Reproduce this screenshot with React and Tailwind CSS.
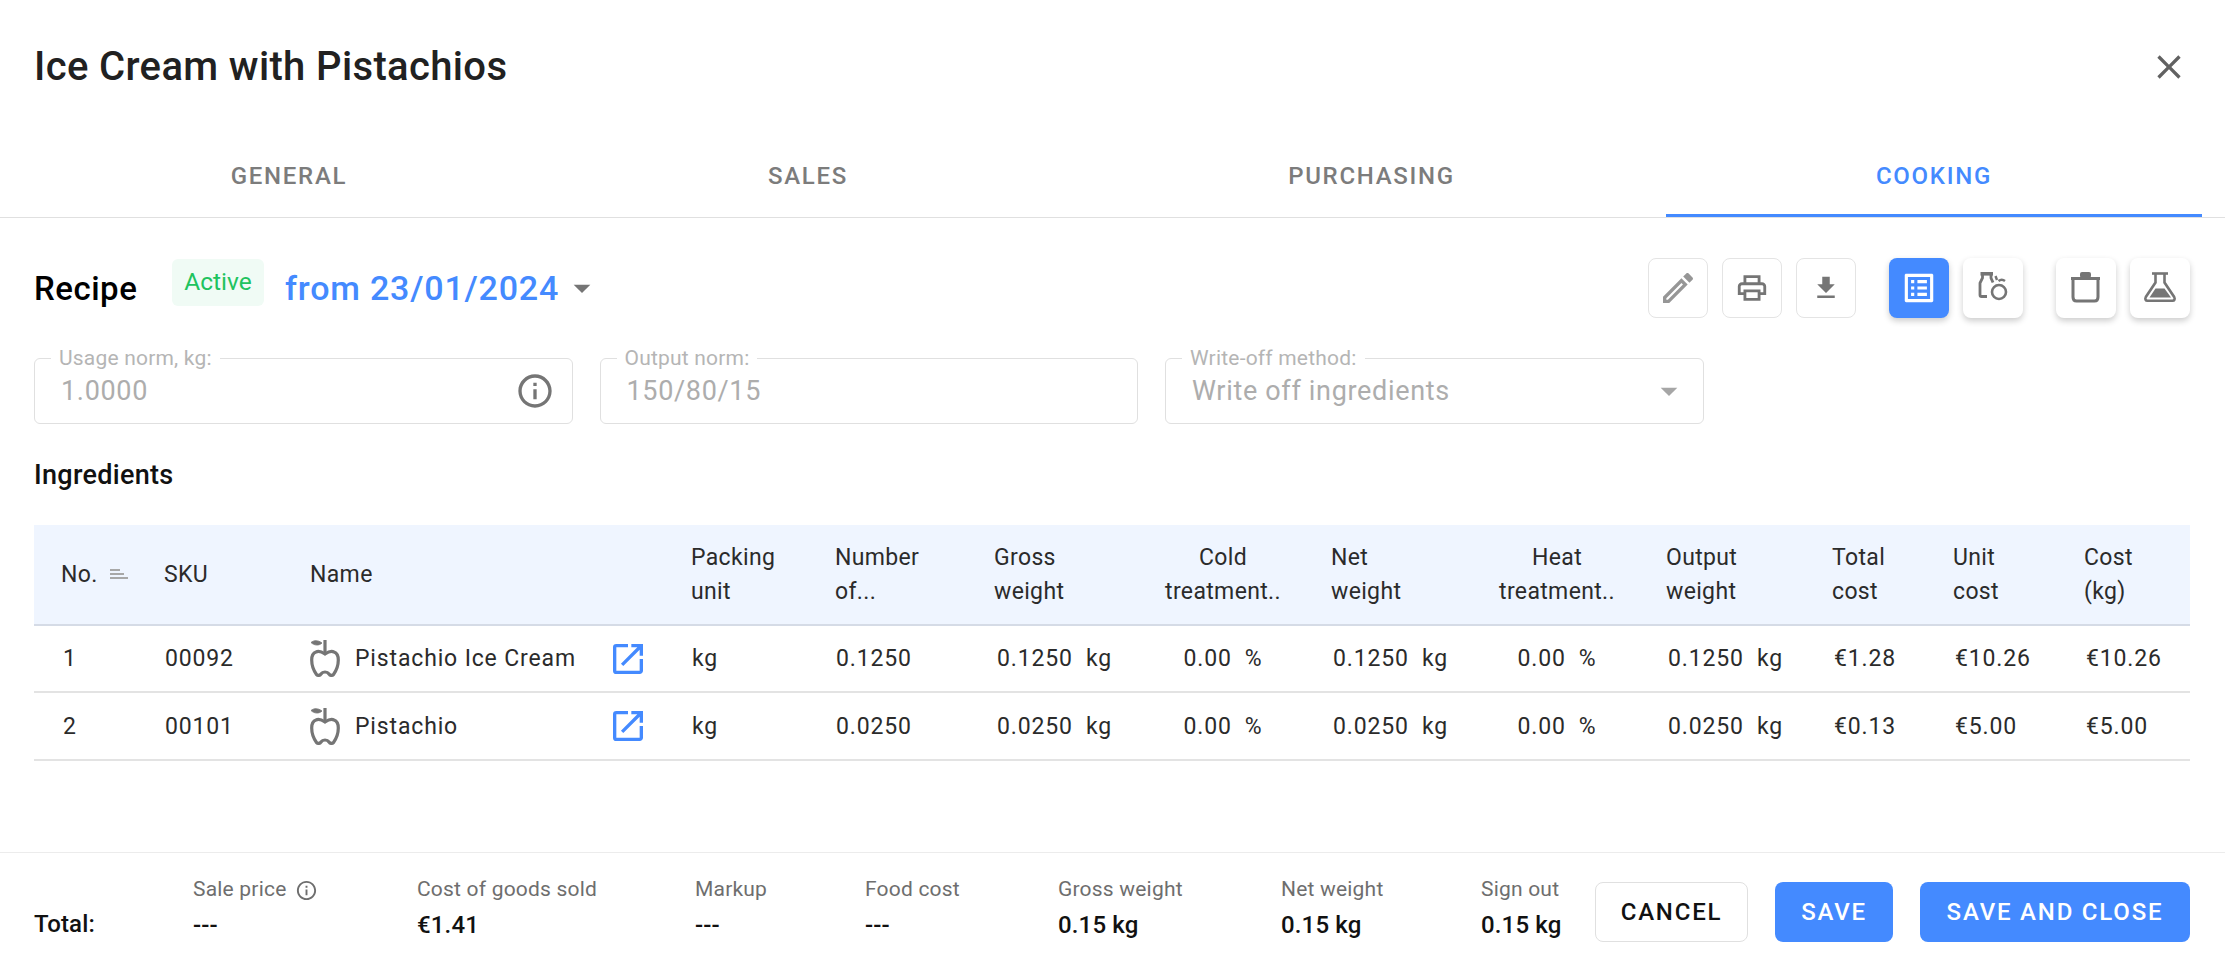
const F = "font-['Roboto',sans-serif]";
const Ico = ({ d, size = 24, color = "#757575", vb = "0 0 24 24", className = "" }) => (
  <svg width={size} height={size} viewBox={vb} fill={color} className={className}><path d={d} /></svg>
);
const Caret = ({ color = "#757575", size = 40 }) => <Ico size={size} color={color} d="M7 10l5 5 5-5z" />;
const Apple = () => (
  <svg width="30" height="37" viewBox="0 0 30 37" fill="none" stroke="#757575" strokeWidth="3.200" className="shrink-0">
    <path d="M15 0v14" />
    <path d="M1 2.500c3-2.500 7-2.500 11 .5-3 3-8 2.500-11-.5z" fill="#757575" strokeWidth="0.800" />
    <path d="M15 14C12 12 8 11 6 12 3 13 1.700 16 1.700 20c0 5 2.300 11 4.800 14.500 1.500 1.500 3.500 1 4.500-.5s2-2 4-2 3 .5 4 2 3 2 4.500.5C26 31 28.300 25 28.300 20c0-4-1.300-7-4.300-8-2-1-6 0-9 2z" />
  </svg>
);
const Open = () => (
  <Ico size={40} color="#448aff" d="M19 19H5V5h7V3H5a2 2 0 0 0-2 2v14a2 2 0 0 0 2 2h14c1.100 0 2-.9 2-2v-7h-2v7zM14 3v2h3.590l-9.830 9.830 1.410 1.410L19 6.410V10h2V3h-7z" />
);
const Field = ({ label, value, right }) => (
  <div className="relative h-[66px] w-[538.5px] rounded-md border border-[#e0e0e0] flex items-center pl-[26px] pr-[17px]">
    <span className="absolute left-[16px] -top-[12px] bg-white px-[8px] text-[21px] leading-[22px] tracking-[0.200px] text-[#b5b5b5]">{label}</span>
    <span className="flex-1 text-[27px] tracking-[0.670px] text-[#adadad]">{value}</span>
    {right}
  </div>
);
const TB = ({ children, kind }) => (
  <div className={
    "w-[60px] h-[60px] rounded-lg flex items-center justify-center " +
    (kind === "line" ? "border border-[#e4e4e4] bg-white" : kind === "blue" ? "bg-[#448aff] shadow-[0_3px_6px_rgba(0,0,0,0.2)]" : "bg-white shadow-[0_3px_6px_rgba(0,0,0,0.2)]")
  }>{children}</div>
);
const cols = "grid grid-cols-[103px_146px_381px_144px_159px_159px_178px_159px_176px_166px_121px_131px_105px] pl-[27px]";
const H = ({ children, center, pr }) => (
  <div className={(center ? "text-center " : "") + (pr || "")}>{children}</div>
);
const rows = [
  ["1", "00092", "Pistachio Ice Cream", "0.1250", "€1.28", "€10.26", "€10.26", "h-[67px]"],
  ["2", "00101", "Pistachio", "0.0250", "€0.13", "€5.00", "€5.00", "h-[68px]"],
];
const Sum = ({ w, label, value, info }) => (
  <div className={w + " shrink-0"}>
    <div className="h-[30px] flex items-center gap-[8px] text-[21px] tracking-[0.200px] text-[#6e6e6e]">
      {label}
      {info && <Ico size={23} color="#6e6e6e" d="M11 7h2v2h-2zm0 4h2v6h-2zm1-9C6.480 2 2 6.480 2 12s4.480 10 10 10 10-4.480 10-10S17.520 2 12 2zm0 18c-4.410 0-8-3.590-8-8s3.590-8 8-8 8 3.590 8 8-3.590 8-8 8z" />}
    </div>
    <div className="mt-[5px] h-[30px] flex items-center text-[24px] font-medium tracking-[0.150px] text-[#111]">{value}</div>
  </div>
);
const Btn = ({ children, w, blue }) => (
  <div className={w + " h-[60px] rounded-lg flex items-center justify-center text-[24px] font-medium tracking-[1.800px] " + (blue ? "bg-[#448aff] text-white" : "bg-white border border-[#e0e0e0] text-[#111]")}>{children}</div>
);
const tabs = [["GENERAL", "w-[500px]"], ["SALES", "w-[538px]"], ["PURCHASING", "w-[589px]"], ["COOKING", "w-[536px]"]];

export default function App() {
  return (
    <div className={F + " w-[2225px] h-[966px] bg-white flex flex-col text-[#212121] overflow-hidden"}>
      <div className="h-[140px] pl-[34px] pr-[36px] pb-[6px] flex items-center justify-between">
        <h1 className="text-[40px] font-medium tracking-[0.360px] text-[#212121]">Ice Cream with Pistachios</h1>
        <Ico size={40} color="#616161" d="M19 6.410 17.590 5 12 10.590 6.410 5 5 6.410 10.590 12 5 17.590 6.410 19 12 13.410 17.590 19 19 17.590 13.410 12z" />
      </div>
      <div className="h-[78px] border-b border-[#e0e0e0] pl-[39px] flex">
        {tabs.map(([t, w], i) => (
          <div key={t} className={w + " h-[77px] pb-[3px] flex items-center justify-center text-[24px] font-medium tracking-[1.700px] border-b-[3px] " + (i === 3 ? "text-[#448aff] border-[#448aff]" : "text-[#7c7c7c] border-transparent")}>{t}</div>
        ))}
      </div>
      <div className="flex-1 pl-[34px] pr-[35px] flex flex-col">
        <div className="mt-[40px] h-[60px] flex items-center">
          <span className="text-[33px] font-medium tracking-[0.500px] text-black w-[138px] pt-[2px]">Recipe</span>
          <span className="h-[47px] w-[92px] -mt-[11px] rounded-md bg-[#f0fbf5] text-[#20c35e] text-[24.500px] flex items-center justify-center">Active</span>
          <span className="ml-[21px] text-[34px] font-medium tracking-[0.800px] text-[#448aff]">from 23/01/2024</span>
          <span className="ml-[3px]"><Caret /></span>
          <div className="ml-auto flex gap-[14px]">
            <TB kind="line"><Ico size={40} color="#969696" d="M3 17.250V21h3.750L17.810 9.940l-3.750-3.750L3 17.250zM5.920 19H5v-.92l9.060-9.060.92.92L5.920 19zM20.710 5.630l-2.340-2.340c-.2-.2-.45-.29-.71-.29s-.51.1-.7.29l-1.830 1.830 3.750 3.750 1.830-1.830c.39-.39.39-1.020 0-1.410z" /></TB>
            <TB kind="line"><Ico size={34} d="M19 8h-1V3H6v5H5c-1.660 0-3 1.340-3 3v6h4v4h12v-4h4v-6c0-1.660-1.340-3-3-3zM8 5h8v3H8V5zm8 14H8v-4h8v4zm2-4v-2H6v2H4v-4c0-.55.45-1 1-1h14c.55 0 1 .45 1 1v4h-2z" /></TB>
            <TB kind="line"><Ico size={30} d="M19 9h-4V3H9v6H5l7 7 7-7zM5 18v2h14v-2H5z" /></TB>
            <div className="w-[5px]" />
            <TB kind="blue"><Ico size={38} color="#fff" d="M19 5v14H5V5h14m1.100-2H3.900c-.5 0-.9.4-.9.9v16.200c0 .4.4.9.9.9h16.200c.4 0 .9-.5.9-.9V3.900c0-.5-.5-.9-.9-.9zM11 7h6v2h-6V7zm0 4h6v2h-6v-2zm0 4h6v2h-6zM7 7h2v2H7zm0 4h2v2H7zm0 4h2v2H7z" /></TB>
            <TB>
              <svg width="36" height="36" viewBox="0 0 36 36" fill="none" stroke="#757575" strokeWidth="2.800">
                <path d="M5.500 3.800H18" strokeWidth="3.600" />
                <path d="M7.500 5v3L5 13v12c0 1 .5 1.500 1.500 1.500H12" />
                <path d="M16 5v3l2 4.500" />
                <circle cx="24" cy="22" r="7" strokeWidth="2.600" />
                <path d="M20.500 6l1.500 4" strokeWidth="2.400" />
                <path d="M23.500 11c2-1.500 4.500-1.500 6.500 0" strokeWidth="2.600" />
              </svg>
            </TB>
            <div className="w-[5px]" />
            <TB>
              <svg width="36" height="36" viewBox="0 0 36 36" fill="none" stroke="#757575" strokeWidth="3">
                <path d="M3 8.500h29" />
                <rect x="12" y="2" width="11" height="6" rx="2" fill="#757575" stroke="none" />
                <path d="M5 9v18c0 2.500 1.500 4 3.500 4h18c2 0 3.500-1.500 3.500-4V9" />
              </svg>
            </TB>
            <TB>
              <svg width="36" height="36" viewBox="0 0 36 36" fill="none" stroke="#757575" strokeWidth="2.600">
                <path d="M10 3.500h16" />
                <path d="M13.500 4v8.500L3.800 27c-1 2-.3 3.700 1.700 3.700h25c2 0 2.700-1.700 1.700-3.700l-9.700-14.500V4" />
                <path d="M13.500 18.500h9L29 27.500H7.500z" fill="#757575" stroke="none" />
              </svg>
            </TB>
          </div>
        </div>
        <div className="mt-[40px] flex gap-[27px]">
          <Field label="Usage norm, kg:" value="1.0000" right={<Ico size={40} color="#757575" d="M11 7h2v2h-2zm0 4h2v6h-2zm1-9C6.480 2 2 6.480 2 12s4.480 10 10 10 10-4.480 10-10S17.520 2 12 2zm0 18c-4.410 0-8-3.590-8-8s3.590-8 8-8 8 3.590 8 8-3.590 8-8 8z" />} />
          <Field label="Output norm:" value="150/80/15" />
          <Field label="Write-off method:" value="Write off ingredients" right={<span className="-mr-[3px]"><Caret color="#a6a6a6" /></span>} />
        </div>
        <div className="mt-[34px] h-[34px] flex items-center text-[27px] font-medium tracking-[0.300px] text-[#111]">Ingredients</div>
        <div className="mt-[33px] text-[23px] tracking-[0.350px] text-[#2b2b2b]">
          <div className={cols + " h-[101px] items-center bg-[#eff5ff] border-b-2 border-[#d5dbe6] leading-[34px]"}>
            <div className="flex items-center gap-[10px]">No.
              <svg width="20" height="14" viewBox="0 0 20 14" fill="#a8a8a8"><rect x="2" y="1" width="10" height="2" /><rect x="2" y="5" width="14" height="2" /><rect x="2" y="9" width="18" height="2" /></svg>
            </div>
            <div>SKU</div>
            <div>Name</div>
            <H>Packing<br />unit</H>
            <H>Number<br />of...</H>
            <H>Gross<br />weight</H>
            <H center pr="pr-[38px]">Cold<br />treatment..</H>
            <H>Net<br />weight</H>
            <H center pr="pr-[42px]">Heat<br />treatment..</H>
            <H>Output<br />weight</H>
            <H>Total<br />cost</H>
            <H>Unit<br />cost</H>
            <H>Cost<br />(kg)</H>
          </div>
          {rows.map((r) => (
            <div key={r[0]} className={cols + " " + r[7] + " items-center border-b-2 border-[#e3e3e3] tracking-[0.850px]"}>
              <div className="pl-[2px] pt-[2px]">{r[0]}</div>
              <div className="pl-[1px] pt-[2px]">{r[1]}</div>
              <div className="flex items-center pr-[43px]">
                <Apple />
                <span className="ml-[15px] flex-1 pt-[2px]">{r[2]}</span>
                <Open />
              </div>
              <div className="pl-[1px] pt-[2px]">kg</div>
              <div className="pl-[1px] pt-[2px]">{r[3]}</div>
              <div className="pl-[3px] pt-[2px] whitespace-pre">{r[3]}{"  "}kg</div>
              <div className="pr-[38px] pt-[2px] text-center whitespace-pre">0.00{"  "}%</div>
              <div className="pl-[2px] pt-[2px] whitespace-pre">{r[3]}{"  "}kg</div>
              <div className="pr-[42px] pt-[2px] text-center whitespace-pre">0.00{"  "}%</div>
              <div className="pl-[2px] pt-[2px] whitespace-pre">{r[3]}{"  "}kg</div>
              <div className="pl-[2px] pt-[2px]">{r[4]}</div>
              <div className="pl-[2px] pt-[2px]">{r[5]}</div>
              <div className="pl-[2px] pt-[2px]">{r[6]}</div>
            </div>
          ))}
        </div>
      </div>
      <div className="h-[114px] border-t border-[#ececec] pl-[34px] pr-[35px] flex items-start">
        <div className="w-[159px] shrink-0 mt-[56px] h-[30px] flex items-center text-[24px] font-medium tracking-[0.150px] text-[#111]">Total:</div>
        <div className="mt-[22px] flex">
          <Sum w="w-[224px]" label="Sale price" value="---" info />
          <Sum w="w-[278px]" label="Cost of goods sold" value="€1.41" />
          <Sum w="w-[170px]" label="Markup" value="---" />
          <Sum w="w-[193px]" label="Food cost" value="---" />
          <Sum w="w-[223px]" label="Gross weight" value="0.15 kg" />
          <Sum w="w-[200px]" label="Net weight" value="0.15 kg" />
          <Sum w="w-[114px]" label="Sign out" value="0.15 kg" />
        </div>
        <div className="mt-[29px] flex gap-[27px]">
          <Btn w="w-[153px]">CANCEL</Btn>
          <Btn w="w-[118px]" blue>SAVE</Btn>
          <Btn w="w-[270px]" blue>SAVE AND CLOSE</Btn>
        </div>
      </div>
    </div>
  );
}
